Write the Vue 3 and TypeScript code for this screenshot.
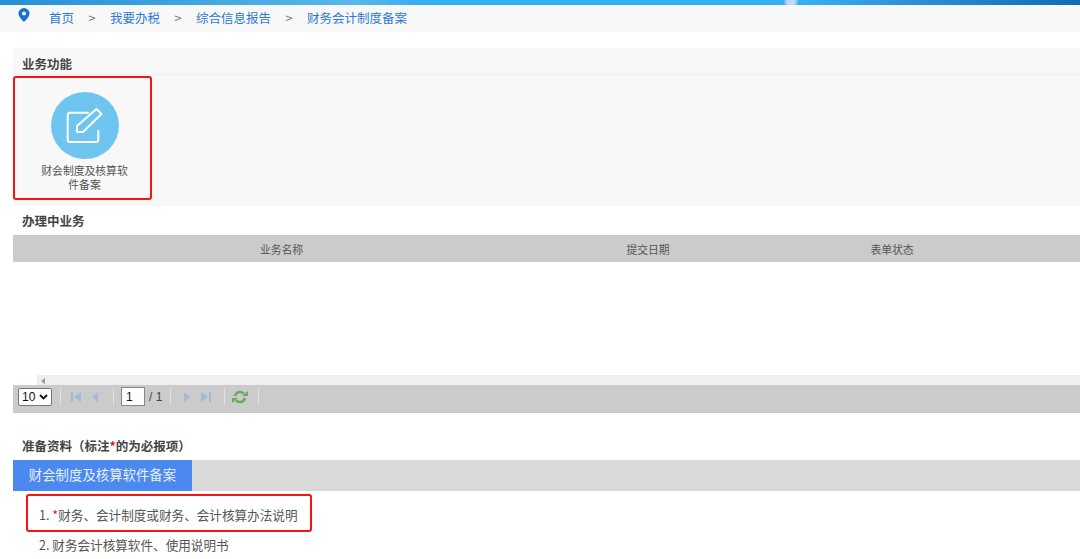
<script setup lang="ts">
const columns = [
  { label: '业务名称', width: '537px' },
  { label: '提交日期', width: '196px' },
  { label: '表单状态', width: '292px' },
]
</script>

<template>
  <div class="page">
    <div class="topbar"></div>
    <nav class="crumbs">
      <svg class="pin" width="12" height="14" viewBox="0 0 12 14">
        <path fill-rule="evenodd" fill="#1a6fd0" d="M6 0a5.6 5.6 0 0 1 5.6 5.6C11.600 9 6 14 6 14S.4 9 .4 5.600A5.600 5.600 0 0 1 6 0zm0 3.600a2 2 0 1 0 0 4 2 2 0 0 0 0-4z" />
      </svg>
      <a>首页</a><i>&gt;</i><a>我要办税</a><i>&gt;</i><a>综合信息报告</a><i>&gt;</i><a>财务会计制度备案</a>
    </nav>
    <main class="content">
      <section class="func">
        <h3 class="func-title">业务功能</h3>
        <div class="func-body">
          <div class="func-card">
            <div class="circle">
              <svg width="40" height="40" viewBox="0 0 40 40" fill="none" stroke="#fff" stroke-width="2" stroke-linejoin="round" stroke-linecap="round">
                <path d="M23 6.700H5A2.300 2.300 0 0 0 2.700 9V33.700A2.300 2.300 0 0 0 5 36H31A2.300 2.300 0 0 0 33.300 33.700V25" />
                <path d="M31.500 3L36.500 8L18 26H12V20Z" />
              </svg>
            </div>
            <div class="func-label">财会制度及核算软件备案</div>
          </div>
        </div>
      </section>
      <h3 class="sec-title">办理中业务</h3>
      <div class="thead">
        <span v-for="c in columns" :key="c.label" :style="{ width: c.width }">{{ c.label }}</span>
      </div>
      <div class="tbody"></div>
      <div class="scroll"><span class="arrow"></span></div>
      <div class="pager">
        <div class="size">
          <span>10</span>
          <svg width="9" height="6" viewBox="0 0 9 6" fill="none" stroke="#111" stroke-width="1.800"><path d="M1 1l3.500 3.500L8 1" /></svg>
        </div>
        <span class="sep s1"></span>
        <svg class="first" width="12" height="12" viewBox="0 0 12 12" fill="#a4bbd8"><rect x="1" y="1" width="2" height="10" /><path d="M11 1v10L4 6z" /></svg>
        <svg class="prev" width="12" height="12" viewBox="0 0 12 12" fill="#a4bbd8"><path d="M9 1v10L3 6z" /></svg>
        <span class="sep s2"></span>
        <input class="num" value="1" />
        <span class="total">/ 1</span>
        <span class="sep s3"></span>
        <svg class="next" width="12" height="12" viewBox="0 0 12 12" fill="#a4bbd8"><path d="M3 1v10l6-5z" /></svg>
        <svg class="last" width="12" height="12" viewBox="0 0 12 12" fill="#a4bbd8"><rect x="9" y="1" width="2" height="10" /><path d="M1 1v10l7-5z" /></svg>
        <span class="sep s2"></span>
        <svg class="refresh" width="16" height="14" viewBox="0 0 16 14" fill="none" stroke="#6aa866" stroke-width="2.600">
          <path d="M3 6C4 3 6 2 8 2c2 0 3 .6 4 1.600" />
          <path d="M13 8c-1 3-3 4-5 4-2 0-3-.6-4-1.600" />
          <path fill="#6aa866" stroke="none" d="M10 6h6V1zM6 8H0v5z" />
        </svg>
        <span class="sep s4"></span>
      </div>
      <h3 class="prep">准备资料（标注<em>*</em>的为必报项）</h3>
      <div class="tabs"><div class="tab">财会制度及核算软件备案</div></div>
      <ol class="docs">
        <li>1. <em>*</em>财务、会计制度或财务、会计核算办法说明</li>
        <li>2. 财务会计核算软件、使用说明书</li>
      </ol>
    </main>
    <div class="mark mark-a"></div>
    <div class="mark mark-b"></div>
  </div>
</template>

<style>
html, body { margin: 0; background: #fff; overflow: hidden; }
</style>

<style scoped>
.page {
  position: relative;
  width: 1080px;
  height: 559px;
  overflow: hidden;
  font-family: "Noto Sans CJK SC", "Liberation Sans", sans-serif;
  font-size: 12px;
  color: #555;
}
.topbar {
  height: 5px;
  background:
    radial-gradient(circle at 791px 1px, #b8dcf5 0, #b8dcf5 4px, transparent 8px),
    linear-gradient(90deg, #2490d6 0%, #58b8e8 33%, #36aef2 39%, #36aef2 75%, #2f90d8 84%, #0f6cb4 100%);
}
.crumbs {
  height: 27px;
  background: #f8f8f8;
  display: flex;
  align-items: center;
  padding: 0 0 2px 49px;
  box-sizing: border-box;
  position: relative;
  font-size: 12.500px;
}
.pin { position: absolute; left: 18px; top: 3px; }
.crumbs a { color: #2b78d8; }
.crumbs i { font-style: normal; color: #777; width: 8px; margin: 0 14px; text-align: center; }
.content { padding: 16px 0 0 13px; }
h3 { margin: 0; font-size: 12.500px; font-weight: 700; color: #444; }
.func { background: #f8f8f8; height: 158px; }
.func-title {
  height: 26px;
  line-height: 32px;
  padding-left: 9px;
  border-bottom: 1px solid #f0f0f0;
}
.func-card { width: 143px; padding-top: 17px; text-align: center; }
.circle {
  width: 68px;
  height: 67px;
  border-radius: 50%;
  margin: 0 auto;
  background: #6ec6f0;
  display: flex;
  align-items: center;
  justify-content: center;
}
.func-label {
  width: 90px;
  margin: 4px auto 0;
  font-size: 10.800px;
  line-height: 14px;
  color: #555;
}
.sec-title { height: 29px; line-height: 30px; padding-left: 9px; }
.thead {
  height: 27px;
  background: #cbcbcb;
  display: flex;
  align-items: center;
  font-size: 10.800px;
  color: #555;
}
.thead span { text-align: center; }
.tbody { height: 113px; }
.scroll { height: 10px; background: #efefef; margin-left: 24px; position: relative; }
.arrow {
  position: absolute;
  left: 4px;
  top: 3px;
  border: 3px solid transparent;
  border-right: 4px solid #999;
  border-left: 0;
}
.pager {
  height: 28px;
  background: #cbcbcb;
  display: flex;
  align-items: center;
  padding: 0 0 5px 5px;
  box-sizing: border-box;
}
.size {
  width: 34px;
  height: 18px;
  box-sizing: border-box;
  padding: 0 3px 0 3px;
  display: flex;
  align-items: center;
  justify-content: space-between;
  font: 12px "Liberation Sans", sans-serif;
  background: #fff;
  border: 1px solid #777;
  border-radius: 2px;
  color: #111;
}
.sep { width: 1px; height: 17px; background: #d6e4f5; }
.s1 { margin-left: 8px; }
.first { margin-left: 9px; }
.prev { margin-left: 7px; }
.s2 { margin-left: 12px; }
.num {
  width: 24px;
  height: 19px;
  box-sizing: border-box;
  padding: 0 0 0 4px;
  margin-left: 7px;
  border: 1px solid #888;
  background: #fff;
  font: 12px "Liberation Sans", sans-serif;
  color: #111;
}
.total { font: 12px "Liberation Sans", sans-serif; color: #444; margin-left: 4px; width: 14px; white-space: nowrap; }
.s3 { margin-left: 7px; }
.next { margin-left: 10px; }
.last { margin-left: 7px; }
.refresh { margin-left: 7px; }
.s4 { margin-left: 10px; }
.prep { height: 47px; line-height: 12px; padding: 27px 0 0 9px; box-sizing: border-box; }
.prep em, .docs em { color: #e02020; font-style: normal; }
.tabs { height: 31px; background: #d9d9d9; }
.tab {
  width: 179px;
  height: 31px;
  line-height: 29px;
  text-align: center;
  background: #4b88ef;
  color: #e8f0fd;
  font-size: 13.400px;
}
.docs { list-style: none; margin: 0; padding: 14px 0 0 26px; font-size: 12.600px; color: #555; }
.docs li { height: 30px; line-height: 20px; }
.mark {
  position: absolute;
  box-sizing: border-box;
  border: 2.500px solid #f5140f;
  border-radius: 3px;
}
.mark-a { left: 13px; top: 76px; width: 139px; height: 124px; }
.mark-b { left: 26px; top: 494px; width: 286px; height: 38px; }
</style>
